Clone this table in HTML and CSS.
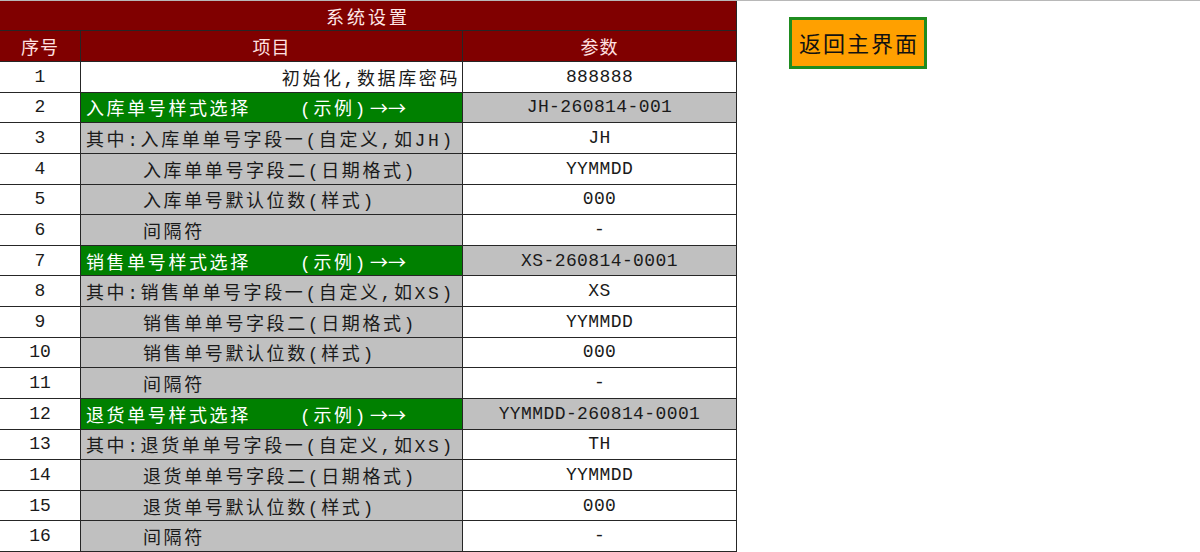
FILE: index.html
```html
<!DOCTYPE html>
<html lang="zh-CN">
<head>
<meta charset="utf-8">
<title>系统设置</title>
<link rel="stylesheet" href="styles.css">
</head>
<body>
<div class="page">
  <div class="sheet">
    <div class="title">系统设置</div>
    <div class="hd">序号</div>
    <div class="hd">项目</div>
    <div class="hd">参数</div>

    <div class="no">1</div>
    <div class="item white right">初始化,数据库密码</div>
    <div class="val">888888</div>

    <div class="no">2</div>
    <div class="item green"><span class="lead">入库单号样式选择</span><span>(示例)</span><span class="arrow">→→</span></div>
    <div class="val gray">JH-260814-001</div>

    <div class="no">3</div>
    <div class="item">其中:入库单单号字段一(自定义,如JH)</div>
    <div class="val">JH</div>

    <div class="no">4</div>
    <div class="item ind">入库单单号字段二(日期格式)</div>
    <div class="val">YYMMDD</div>

    <div class="no">5</div>
    <div class="item ind">入库单号默认位数(样式)</div>
    <div class="val">000</div>

    <div class="no">6</div>
    <div class="item ind">间隔符</div>
    <div class="val">-</div>

    <div class="no">7</div>
    <div class="item green"><span class="lead">销售单号样式选择</span><span>(示例)</span><span class="arrow">→→</span></div>
    <div class="val gray">XS-260814-0001</div>

    <div class="no">8</div>
    <div class="item">其中:销售单单号字段一(自定义,如XS)</div>
    <div class="val">XS</div>

    <div class="no">9</div>
    <div class="item ind">销售单单号字段二(日期格式)</div>
    <div class="val">YYMMDD</div>

    <div class="no">10</div>
    <div class="item ind">销售单号默认位数(样式)</div>
    <div class="val">000</div>

    <div class="no">11</div>
    <div class="item ind">间隔符</div>
    <div class="val">-</div>

    <div class="no">12</div>
    <div class="item green"><span class="lead">退货单号样式选择</span><span>(示例)</span><span class="arrow">→→</span></div>
    <div class="val gray">YYMMDD-260814-0001</div>

    <div class="no">13</div>
    <div class="item">其中:退货单单号字段一(自定义,如XS)</div>
    <div class="val">TH</div>

    <div class="no">14</div>
    <div class="item ind">退货单单号字段二(日期格式)</div>
    <div class="val">YYMMDD</div>

    <div class="no">15</div>
    <div class="item ind">退货单号默认位数(样式)</div>
    <div class="val">000</div>

    <div class="no">16</div>
    <div class="item ind">间隔符</div>
    <div class="val">-</div>
  </div>
  <div class="side">
    <button class="back" type="button">返回主界面</button>
  </div>
</div>
</body>
</html>
```

FILE: styles.css
```css
html, body {
  margin: 0;
  padding: 0;
  background: #ffffff;
}

body {
  width: 1200px;
  height: 552px;
  overflow: hidden;
  font-family: "Liberation Mono", "Noto Sans CJK SC", monospace;
  font-size: 18px;
  color: #1a1a1a;
}

.page {
  display: flex;
  align-items: flex-start;
  border-top: 1px solid #b8b8b8;
  height: 551px;
}

.sheet {
  display: grid;
  grid-template-columns: 80px 381px 273px;
  grid-template-rows: 29px 30px repeat(16, 1fr);
  gap: 1px;
  padding: 0 1px 1px 0;
  height: 550px;
  background: #262626;
}

.sheet > div {
  display: flex;
  align-items: center;
  white-space: nowrap;
  overflow: hidden;
}

.title {
  grid-column: 1 / 4;
  background: #800000;
  color: #ffe8e8;
  justify-content: center;
  letter-spacing: 3px;
  font-family: "Noto Sans CJK SC", sans-serif;
  font-size: 18px;
}

.hd {
  background: #800000;
  color: #ffe0e0;
  justify-content: center;
  font-family: "Noto Sans CJK SC", sans-serif;
  letter-spacing: 1px;
}

.no {
  background: #ffffff;
  justify-content: center;
}

.item {
  background: #c0c0c0;
  padding-left: 5px;
  letter-spacing: 2.6px;
}

.item.ind {
  padding-left: 62px;
}

.item.white {
  background: #ffffff;
}

.item.right {
  justify-content: flex-end;
  padding-right: 2px;
}

.item.green {
  background: #008000;
  color: #ffffff;
}

.lead {
  display: inline-block;
  width: 214px;
}

.arrow {
  font-family: "Noto Sans CJK SC", sans-serif;
  letter-spacing: 0;
  margin-left: 2px;
}

.val {
  background: #ffffff;
  justify-content: center;
  letter-spacing: 0.4px;
}

.val.gray {
  background: #c0c0c0;
}

.side {
  padding: 16px 0 0 52px;
}

.back {
  display: block;
  width: 138px;
  height: 52px;
  margin: 0;
  padding: 0 0 2px 2px;
  background: #ffa000;
  border: 3px solid #1f8c1f;
  color: #111111;
  font-family: "Noto Sans CJK SC", sans-serif;
  font-size: 22px;
  letter-spacing: 2px;
  cursor: pointer;
}
```
